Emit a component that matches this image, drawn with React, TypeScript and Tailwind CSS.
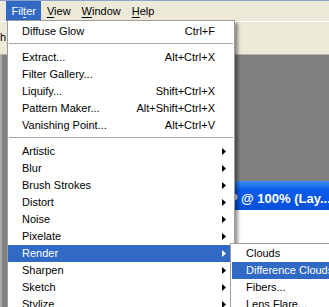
import React from 'react';

type Item =
  | { kind: 'sep' }
  | { kind: 'item'; label: string; shortcut?: string; sub?: boolean; active?: boolean };

const filterItems: Item[] = [
  { kind: 'item', label: 'Diffuse Glow', shortcut: 'Ctrl+F' },
  { kind: 'sep' },
  { kind: 'item', label: 'Extract...', shortcut: 'Alt+Ctrl+X' },
  { kind: 'item', label: 'Filter Gallery...' },
  { kind: 'item', label: 'Liquify...', shortcut: 'Shift+Ctrl+X' },
  { kind: 'item', label: 'Pattern Maker...', shortcut: 'Alt+Shift+Ctrl+X' },
  { kind: 'item', label: 'Vanishing Point...', shortcut: 'Alt+Ctrl+V' },
  { kind: 'sep' },
  { kind: 'item', label: 'Artistic', sub: true },
  { kind: 'item', label: 'Blur', sub: true },
  { kind: 'item', label: 'Brush Strokes', sub: true },
  { kind: 'item', label: 'Distort', sub: true },
  { kind: 'item', label: 'Noise', sub: true },
  { kind: 'item', label: 'Pixelate', sub: true },
  { kind: 'item', label: 'Render', sub: true, active: true },
  { kind: 'item', label: 'Sharpen', sub: true },
  { kind: 'item', label: 'Sketch', sub: true },
  { kind: 'item', label: 'Stylize', sub: true },
];

const renderItems = [
  { label: 'Clouds' },
  { label: 'Difference Clouds', active: true },
  { label: 'Fibers...' },
  { label: 'Lens Flare...' },
];

function Arrow() {
  return (
    <svg width="4" height="7" viewBox="0 0 4 7" className="block">
      <path d="M0 0L4 3.5L0 7Z" fill="currentColor" />
    </svg>
  );
}

function MenuTitle({ text, mn, active }: { text: string; mn: number; active?: boolean }) {
  return (
    <div
      className={`px-[5.5px] h-[20px] leading-[20px] ${
        active ? 'bg-[#316ac5] text-white' : 'text-black'
      }`}
    >
      {text.slice(0, mn)}
      <span className="underline underline-offset-[2px]">{text[mn]}</span>
      {text.slice(mn + 1)}
    </div>
  );
}

export default function App() {
  return (
    <div className="relative w-[329px] h-[307px] overflow-hidden bg-[#808080] flex flex-col font-['Liberation_Sans',Arial,sans-serif] text-[11px]">
      {/* menu bar */}
      <div className="h-[21px] shrink-0 bg-[#ece9d8] border-t border-[#8ea3c8] flex pl-[6px]">
        <MenuTitle text="Filter" mn={3} active />
        <MenuTitle text="View" mn={0} />
        <MenuTitle text="Window" mn={0} />
        <MenuTitle text="Help" mn={0} />
      </div>

      {/* options bar */}
      <div className="h-[34px] shrink-0 bg-[#ece9d8] border-t border-white border-b border-b-[#b9b6a8]">
        <div className="mt-[10px] leading-[11px] text-black">h</div>
      </div>

      {/* workspace */}
      <div className="flex-1 flex border-l-2 border-[#a9a9a9] pl-[224px] pt-[126px]">
        <div className="flex-1 flex flex-col">
          <div className="h-[29px] bg-gradient-to-b from-[#3d8cf6] via-[#0a5ceb] via-30% to-[#0650dc] pl-[3px] pt-[10px]">
            <div className="font-bold text-[13px] leading-[16px] text-white whitespace-nowrap">
              P @ 100% (Lay...
            </div>
          </div>
          <div className="flex-1 bg-white" />
        </div>
      </div>

      {/* Filter menu */}
      <div className="absolute left-[7px] top-[20px] w-[228px] bg-white border border-[#9d9d9d] pt-[2px] shadow-[3px_3px_3px_rgba(0,0,0,0.4)]">
        {filterItems.map((it, i) =>
          it.kind === 'sep' ? (
            <div key={i} className="h-[9px] pt-[3px] px-[1px]">
              <div className="border-t border-[#a7a6a0]" />
            </div>
          ) : (
            <div
              key={i}
              className={`h-[17px] flex items-center pl-[14px] ${
                it.active ? 'bg-[#316ac5] text-white' : 'text-black'
              }`}
            >
              <span className="flex-1 whitespace-nowrap">{it.label}</span>
              {it.shortcut && <span className="whitespace-nowrap">{it.shortcut}</span>}
              <div className="w-[19px] pl-[7px]">{it.sub && <Arrow />}</div>
            </div>
          )
        )}
      </div>

      {/* Render submenu */}
      <div className="absolute left-[230px] top-[243px] w-[140px] bg-white border border-[#9d9d9d] pt-[1px] pl-[1px]">
        {renderItems.map((it) => (
          <div
            key={it.label}
            className={`h-[17px] flex items-center pl-[14px] whitespace-nowrap ${
              it.active ? 'bg-[#316ac5] text-white' : 'text-black'
            }`}
          >
            {it.label}
          </div>
        ))}
      </div>
    </div>
  );
}
